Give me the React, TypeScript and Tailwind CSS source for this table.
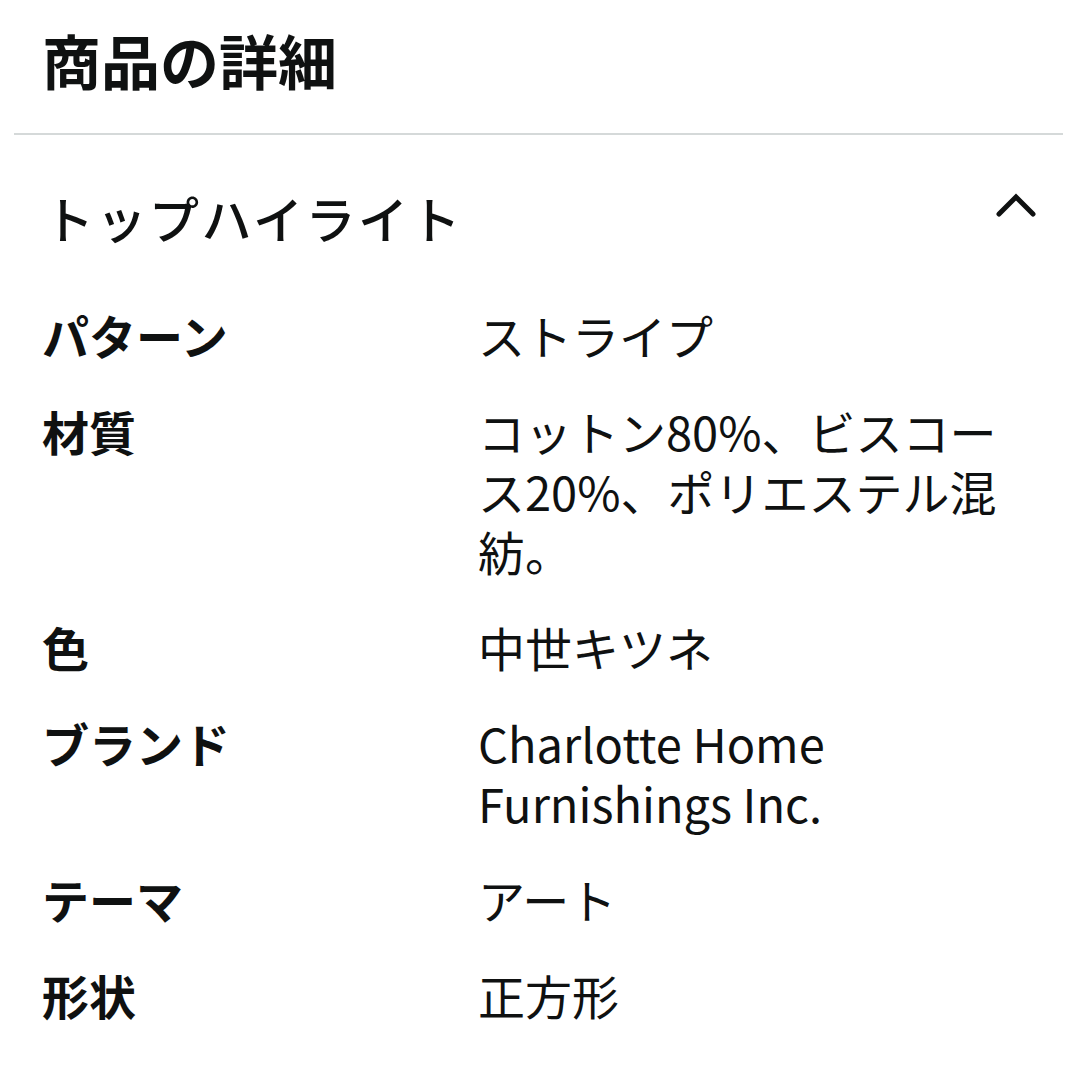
import React from 'react';

const rows: { label: string; value: string }[] = [
    { label: 'パターン', value: 'ストライプ' },
    { label: '材質', value: 'コットン80%、ビスコース20%、ポリエステル混紡。' },
    { label: '色', value: '中世キツネ' },
    { label: 'ブランド', value: 'Charlotte Home Furnishings Inc.' },
    { label: 'テーマ', value: 'アート' },
    { label: '形状', value: '正方形' },
];

export default function App() {
    return (
        <div
            className="w-[1078px] h-[1080px] overflow-hidden bg-white text-[#0f1111]"
            style={{ fontFamily: '"Noto Sans CJK JP", "Noto Sans", sans-serif' }}
        >
            {/* Section title */}
            <h1 className="pl-[42px] pt-[30px] text-[59px] leading-[60px] font-bold">商品の詳細</h1>

            <div className="mt-[43px] ml-[14px] mr-[15px] h-[2px] bg-[#d5d9d9]" />

            {/* Accordion header */}
            <div className="mt-[52px] flex items-center justify-between pl-[44px] pr-[42px]">
                <h2 className="text-[50px] leading-[60px] font-medium tracking-[2.5px]">トップハイライト</h2>
                <svg width="40" height="26" viewBox="0 0 40 26" className="-mt-[24px]">
                    <polyline
                        points="3,22 20,5 37,22"
                        fill="none"
                        stroke="#0f1111"
                        strokeWidth="5"
                        strokeLinecap="round"
                        strokeLinejoin="miter"
                    />
                </svg>
            </div>

            {/* Highlights */}
            <div className="mt-[58px] grid grid-cols-[436px_540px] gap-y-[36px] pl-[42px]">
                {rows.map((row) => (
                    <React.Fragment key={row.label}>
                        <div className="text-[47px] leading-[60px] font-bold">{row.label}</div>
                        <div className="text-[47px] leading-[60px] font-normal">{row.value}</div>
                    </React.Fragment>
                ))}
            </div>
        </div>
    );
}
